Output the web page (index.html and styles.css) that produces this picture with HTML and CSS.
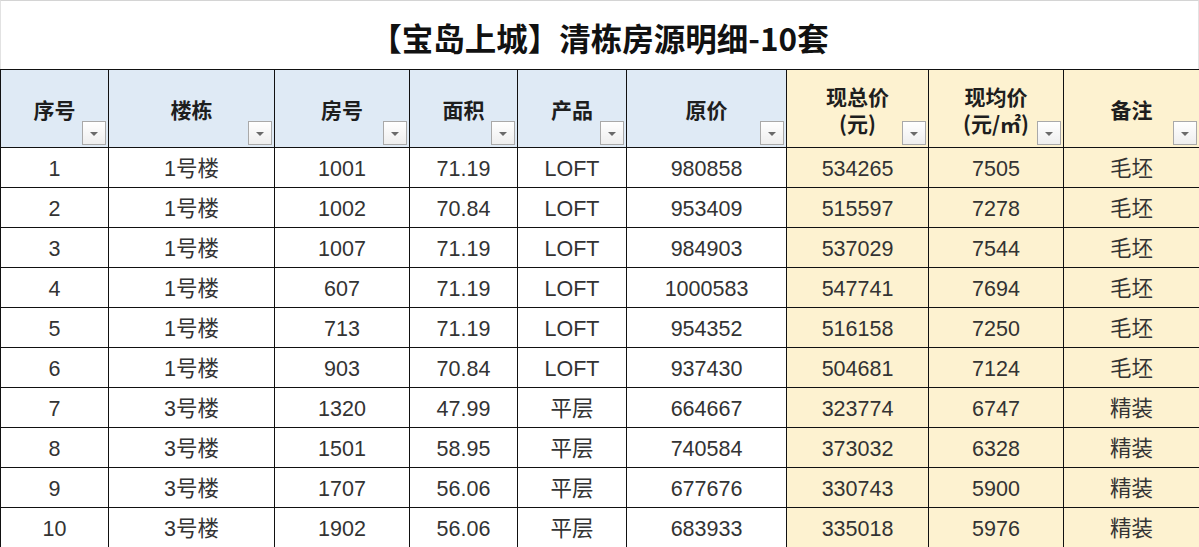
FILE: index.html
```html
<!DOCTYPE html>
<html lang="zh">
<head>
<meta charset="utf-8">
<title>宝岛上城 清栋房源明细</title>
<link rel="stylesheet" href="styles.css">
</head>
<body>
<div class="sheet">
  <h1 class="title">【宝岛上城】清栋房源明细-10套</h1>
  <table class="grid">
    <colgroup>
      <col class="c1"><col class="c2"><col class="c3"><col class="c4"><col class="c5"><col class="c6"><col class="c7"><col class="c8"><col class="c9">
    </colgroup>
    <thead>
      <tr>
        <th class="blue">序号<span class="filter"></span></th>
        <th class="blue">楼栋<span class="filter"></span></th>
        <th class="blue">房号<span class="filter"></span></th>
        <th class="blue">面积<span class="filter"></span></th>
        <th class="blue">产品<span class="filter"></span></th>
        <th class="blue">原价<span class="filter"></span></th>
        <th class="yellow">现总价<br>(元)<span class="filter"></span></th>
        <th class="yellow">现均价<br>(元/㎡)<span class="filter"></span></th>
        <th class="yellow">备注<span class="filter"></span></th>
      </tr>
    </thead>
    <tbody>
      <tr><td>1</td><td>1号楼</td><td>1001</td><td>71.19</td><td>LOFT</td><td>980858</td><td class="yellow">534265</td><td class="yellow">7505</td><td class="yellow">毛坯</td></tr>
      <tr><td>2</td><td>1号楼</td><td>1002</td><td>70.84</td><td>LOFT</td><td>953409</td><td class="yellow">515597</td><td class="yellow">7278</td><td class="yellow">毛坯</td></tr>
      <tr><td>3</td><td>1号楼</td><td>1007</td><td>71.19</td><td>LOFT</td><td>984903</td><td class="yellow">537029</td><td class="yellow">7544</td><td class="yellow">毛坯</td></tr>
      <tr><td>4</td><td>1号楼</td><td>607</td><td>71.19</td><td>LOFT</td><td>1000583</td><td class="yellow">547741</td><td class="yellow">7694</td><td class="yellow">毛坯</td></tr>
      <tr><td>5</td><td>1号楼</td><td>713</td><td>71.19</td><td>LOFT</td><td>954352</td><td class="yellow">516158</td><td class="yellow">7250</td><td class="yellow">毛坯</td></tr>
      <tr><td>6</td><td>1号楼</td><td>903</td><td>70.84</td><td>LOFT</td><td>937430</td><td class="yellow">504681</td><td class="yellow">7124</td><td class="yellow">毛坯</td></tr>
      <tr><td>7</td><td>3号楼</td><td>1320</td><td>47.99</td><td>平层</td><td>664667</td><td class="yellow">323774</td><td class="yellow">6747</td><td class="yellow">精装</td></tr>
      <tr><td>8</td><td>3号楼</td><td>1501</td><td>58.95</td><td>平层</td><td>740584</td><td class="yellow">373032</td><td class="yellow">6328</td><td class="yellow">精装</td></tr>
      <tr><td>9</td><td>3号楼</td><td>1707</td><td>56.06</td><td>平层</td><td>677676</td><td class="yellow">330743</td><td class="yellow">5900</td><td class="yellow">精装</td></tr>
      <tr><td>10</td><td>3号楼</td><td>1902</td><td>56.06</td><td>平层</td><td>683933</td><td class="yellow">335018</td><td class="yellow">5976</td><td class="yellow">精装</td></tr>
    </tbody>
  </table>
</div>
</body>
</html>
```
FILE: styles.css
```css
html, body {
  margin: 0;
  padding: 0;
  background: #ffffff;
}

.sheet {
  width: 1199px;
  font-family: "Liberation Sans", "Noto Sans CJK SC", sans-serif;
  color: #2a2a2a;
}

.title {
  margin: 0;
  height: 69px;
  border-top: 1px solid #d4d4d4;
  border-left: 1px solid #e2e2e2;
  border-right: 1px solid #e2e2e2;
  box-sizing: border-box;
  display: flex;
  align-items: center;
  justify-content: center;
  padding-top: 4px;
  font-family: "Noto Sans CJK SC", sans-serif;
  font-size: 31.5px;
  font-weight: 700;
  color: #111;
}

.grid {
  width: 1199px;
  border-collapse: collapse;
  table-layout: fixed;
}

.c1 { width: 108px; }
.c2 { width: 166px; }
.c3 { width: 135px; }
.c4 { width: 108px; }
.c5 { width: 109px; }
.c6 { width: 160px; }
.c7 { width: 142px; }
.c8 { width: 135px; }
.c9 { width: 136px; }

.grid th,
.grid td {
  border: 1px solid #111;
  padding: 0;
  text-align: center;
  vertical-align: middle;
}

.grid th {
  position: relative;
  height: 75px;
  font-family: "Noto Sans CJK SC", sans-serif;
  font-size: 21px;
  font-weight: 700;
  line-height: 27px;
  color: #1e1e1e;
  padding-top: 2px;
}

.grid td {
  height: 36px;
  padding-top: 3px;
  font-size: 21.5px;
  line-height: 24px;
  color: #333;
}

.blue { background: #dfeaf5; }
.yellow { background: #fdf2d0; }
.grid td.yellow { background: #fdf2d0; }

.filter {
  position: absolute;
  right: 2px;
  bottom: 2px;
  width: 24px;
  height: 24px;
  box-sizing: border-box;
  border: 1px solid #a9a9a9;
  background: linear-gradient(#ffffff, #eeeeee);
}

.filter::after {
  content: "";
  position: absolute;
  left: 7px;
  top: 10px;
  border-left: 4px solid transparent;
  border-right: 4px solid transparent;
  border-top: 4px solid #6a6a6a;
}
```
